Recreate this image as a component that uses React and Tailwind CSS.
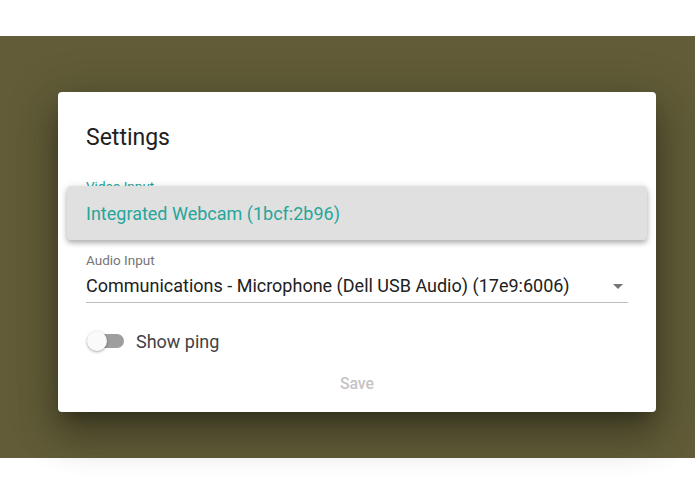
export default function App() {
  return (
    <div className="h-[494px] w-[695px] flex flex-col bg-white font-['Roboto',sans-serif]">
      <div className="h-[36px] bg-white" />
      <div className="h-[422px] bg-[#625d38] pt-[56px] pl-[58px]">
        {/* Dialog */}
        <div className="relative w-[598px] h-[320px] bg-white rounded-[4px] shadow-[0_11px_15px_-7px_rgba(0,0,0,0.3),0_24px_38px_3px_rgba(0,0,0,0.2),0_9px_46px_8px_rgba(0,0,0,0.18)] pt-[30px] px-[28px]">
          <h2 className="h-[32px] leading-[32px] text-[23px] font-normal text-[#212121]">Settings</h2>

          {/* Video input field (covered by menu) */}
          <div className="mt-[24px] w-[542px]">
            <div className="h-[16px] leading-[16px] text-[13.5px] text-[#26a69a]">Video Input</div>
            <div className="mt-[6px] h-[24px] leading-[24px] text-[18px] text-[#212121]">Integrated Webcam (1bcf:2b96)</div>
            <div className="mt-[4px] h-[2px] bg-[#26a69a]" />
          </div>

          {/* Audio input field */}
          <div className="mt-[22px] w-[542px]">
            <div className="h-[16px] leading-[16px] text-[13.5px] text-[#757575]">Audio Input</div>
            <div className="mt-[6px] h-[24px] flex items-center justify-between">
              <span className="text-[18px] leading-[24px] text-[#212121]">Communications - Microphone (Dell USB Audio) (17e9:6006)</span>
              <svg width="10" height="5" viewBox="0 0 10 5" className="mr-[5px]">
                <path d="M0 0 L10 0 L5 5 Z" fill="#757575" />
              </svg>
            </div>
            <div className="mt-[4px] h-px bg-[#bdbdbd]" />
          </div>

          {/* Switch */}
          <div className="mt-[25px] h-[26px] flex items-center">
            <div className="relative w-[40px] h-[20px] flex items-center">
              <div className="absolute left-[4px] w-[34px] h-[14px] rounded-full bg-[#9e9e9e]" />
              <div className="absolute left-[1px] w-[20px] h-[20px] rounded-full bg-[#fafafa] shadow-[0_1px_3px_rgba(0,0,0,0.35)]" />
            </div>
            <span className="ml-[10px] text-[18px] text-[#424242]">Show ping</span>
          </div>

          {/* Save */}
          <div className="mt-[20px] flex justify-center">
            <span className="text-[15.8px] font-medium text-[#c4c4c4] leading-[20px]">Save</span>
          </div>

          {/* Open menu overlay */}
          <div className="absolute left-[9px] top-[94px] w-[580px] h-[54px] bg-[#e0e0e0] rounded-[4px] shadow-[0_3px_5px_rgba(0,0,0,0.25),0_1px_10px_rgba(0,0,0,0.12)] flex items-center pl-[19px]">
            <span className="text-[18px] text-[#26a69a]">Integrated Webcam (1bcf:2b96)</span>
          </div>
        </div>
      </div>
      <div className="flex-1 bg-white" />
    </div>
  );
}
